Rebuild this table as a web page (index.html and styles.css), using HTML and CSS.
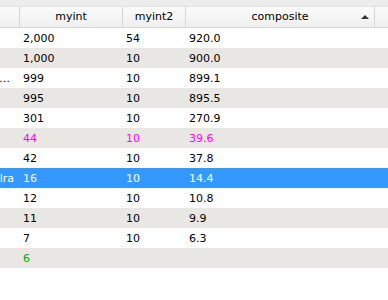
FILE: index.html
```html
<!DOCTYPE html>
<html lang="en">
<head>
<meta charset="utf-8">
<title>Table view</title>
<link rel="stylesheet" href="styles.css">
</head>
<body>
<div class="view">
  <div class="band"></div>

  <div class="row header">
    <div class="cell"></div>
    <div class="cell">myint</div>
    <div class="cell">myint2</div>
    <div class="cell sorted">composite <span class="arrow"></span></div>
    <div class="cell"></div>
  </div>

  <div class="row">
    <div class="cell name"></div><div class="cell">2,000</div><div class="cell">54</div><div class="cell">920.0</div><div class="cell"></div>
  </div>
  <div class="row alt">
    <div class="cell name"></div><div class="cell">1,000</div><div class="cell">10</div><div class="cell">900.0</div><div class="cell"></div>
  </div>
  <div class="row">
    <div class="cell name elided">…</div><div class="cell">999</div><div class="cell">10</div><div class="cell">899.1</div><div class="cell"></div>
  </div>
  <div class="row alt">
    <div class="cell name"></div><div class="cell">995</div><div class="cell">10</div><div class="cell">895.5</div><div class="cell"></div>
  </div>
  <div class="row">
    <div class="cell name"></div><div class="cell">301</div><div class="cell">10</div><div class="cell">270.9</div><div class="cell"></div>
  </div>
  <div class="row alt pink">
    <div class="cell name"></div><div class="cell">44</div><div class="cell">10</div><div class="cell">39.6</div><div class="cell"></div>
  </div>
  <div class="row">
    <div class="cell name"></div><div class="cell">42</div><div class="cell">10</div><div class="cell">37.8</div><div class="cell"></div>
  </div>
  <div class="row selected">
    <div class="cell name">lra</div><div class="cell">16</div><div class="cell">10</div><div class="cell">14.4</div><div class="cell"></div>
  </div>
  <div class="row">
    <div class="cell name"></div><div class="cell">12</div><div class="cell">10</div><div class="cell">10.8</div><div class="cell"></div>
  </div>
  <div class="row alt">
    <div class="cell name"></div><div class="cell">11</div><div class="cell">10</div><div class="cell">9.9</div><div class="cell"></div>
  </div>
  <div class="row">
    <div class="cell name"></div><div class="cell">7</div><div class="cell">10</div><div class="cell">6.3</div><div class="cell"></div>
  </div>
  <div class="row alt green">
    <div class="cell name"></div><div class="cell">6</div><div class="cell"></div><div class="cell"></div><div class="cell"></div>
  </div>
</div>
</body>
</html>
```

FILE: styles.css
```css
body {
  margin: 0;
  background: #fff;
  font-family: "DejaVu Sans", Verdana, sans-serif;
  font-size: 11px;
  color: #000;
}
.view {
  width: 388px;
  overflow: hidden;
}
.band {
  height: 7px;
  background: #ececec;
  border-bottom: 1px solid #e0e0e0;
  box-sizing: border-box;
}
.row {
  display: grid;
  grid-template-columns: 19px 103px 63px 189px 40px;
  height: 20px;
  background: #fff;
}
.row.alt {
  background: #e9e7e3;
}
.cell {
  display: flex;
  align-items: center;
  padding-left: 4px;
  white-space: nowrap;
  overflow: hidden;
}
.cell.name {
  padding: 0 5px 0 0;
  justify-content: flex-end;
}
.cell.elided {
  padding-right: 9px;
}

/* header */
.header {
  background: linear-gradient(#fbfbfb, #efefef);
  border-bottom: 1px solid #d6d6d6;
}
.header .cell {
  justify-content: center;
  padding: 0 0 1px 0;
  border-left: 1px solid #d6d6d6;
  color: #000;
}
.header .cell:first-child {
  border-left: none;
}
.header .sorted {
  position: relative;
  padding-left: 0;
}
.arrow {
  position: absolute;
  right: 5px;
  top: 8px;
  width: 0;
  height: 0;
  border-left: 4px solid transparent;
  border-right: 4px solid transparent;
  border-bottom: 4px solid #333;
}

/* row states */
.row.selected {
  background: #3399ff;
  color: #fff;
}
.row.pink {
  color: #ff00ff;
}
.row.green {
  color: #00aa00;
}
```
